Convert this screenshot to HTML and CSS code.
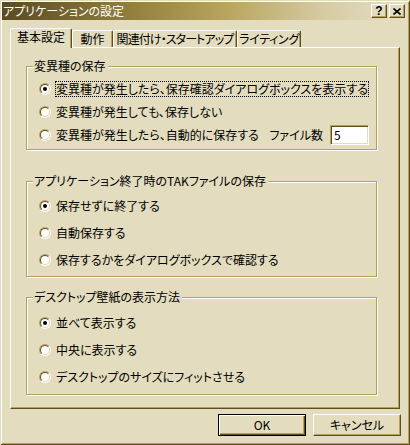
FILE: index.html
```html
<!DOCTYPE html>
<html lang="ja">
<head>
<meta charset="utf-8">
<title>アプリケーションの設定</title>
<link rel="stylesheet" href="styles.css">
</head>
<body>
<div class="window">
  <div class="titlebar">
    <span class="title">アプリケーションの設定</span>
    <div class="caption-btns">
      <span class="cbtn help">?</span>
      <span class="cbtn close"><svg width="8" height="7" viewBox="0 0 8 7"><path d="M0.5 0.5 L7.5 6.5 M7.5 0.5 L0.5 6.5" stroke="#000" stroke-width="1.6" fill="none"/></svg></span>
    </div>
  </div>
  <div class="client">
    <div class="tabs">
      <div class="tab tab-1 selected">基本設定</div>
      <div class="tab tab-2">動作</div>
      <div class="tab tab-3">関連付け・スタートアップ</div>
      <div class="tab tab-4">ライティング</div>
    </div>
    <div class="panel">
      <div class="group g1">
        <div class="legend">変異種の保存</div>
        <div class="rows">
          <div class="row"><span class="radio checked"><span class="radio-in"></span></span><span class="label focus">変異種が発生したら、保存確認ダイアログボックスを表示する</span></div>
          <div class="row"><span class="radio"><span class="radio-in"></span></span><span class="label">変異種が発生しても、保存しない</span></div>
          <div class="row"><span class="radio"><span class="radio-in"></span></span><span class="label">変異種が発生したら、自動的に保存する</span>
            <span class="filecount"><span class="fc-label">ファイル数</span><span class="textbox">5</span></span>
          </div>
        </div>
      </div>
      <div class="group g2">
        <div class="legend">アプリケーション終了時のTAKファイルの保存</div>
        <div class="rows">
          <div class="row"><span class="radio checked"><span class="radio-in"></span></span><span class="label">保存せずに終了する</span></div>
          <div class="row"><span class="radio"><span class="radio-in"></span></span><span class="label">自動保存する</span></div>
          <div class="row"><span class="radio"><span class="radio-in"></span></span><span class="label">保存するかをダイアログボックスで確認する</span></div>
        </div>
      </div>
      <div class="group g3">
        <div class="legend">デスクトップ壁紙の表示方法</div>
        <div class="rows">
          <div class="row"><span class="radio checked"><span class="radio-in"></span></span><span class="label">並べて表示する</span></div>
          <div class="row"><span class="radio"><span class="radio-in"></span></span><span class="label">中央に表示する</span></div>
          <div class="row"><span class="radio"><span class="radio-in"></span></span><span class="label">デスクトップのサイズにフィットさせる</span></div>
        </div>
      </div>
    </div>
    <div class="buttons">
      <div class="btn default">OK</div>
      <div class="btn">キャンセル</div>
    </div>
  </div>
</div>
</body>
</html>
```

FILE: styles.css
```css
* { box-sizing: border-box; }
html, body { margin: 0; padding: 0; }
body {
  background: #e3dcbe;
  font-family: "Noto Sans CJK JP", "Noto Sans", sans-serif;
  font-size: 12px;
  font-feature-settings: "palt";
  line-height: 14px;
  color: #000;
}
.window {
  width: 410px;
  height: 445px;
  background: #e3dcbe;
  padding: 2px 3px 3px 2px;
  box-shadow: inset 1px 1px 0 #e3dcbe, inset -1px -1px 0 #5e4f1c,
              inset 2px 2px 0 #ffffff, inset -2px -2px 0 #b5a15a;
}
.titlebar {
  height: 18px;
  display: flex;
  align-items: center;
  justify-content: space-between;
  background: linear-gradient(to right, #594a22 0%, #8f7c3c 30%, #b8a45e 55%, #d6cca4 80%, #e6dfc6 100%);
}
.title {
  color: #fff;
  padding-left: 1px;
  line-height: 16px;
}
.caption-btns {
  display: flex;
  gap: 2px;
  margin-right: 2px;
}
.cbtn {
  width: 16px;
  height: 14px;
  background: #e3dcbe;
  border: 1px solid;
  border-color: #fff #5e4f1c #5e4f1c #fff;
  box-shadow: inset -1px -1px 0 #b5a15a;
  display: flex;
  align-items: center;
  justify-content: center;
}
.help {
  font-family: "Liberation Sans", sans-serif;
  font-weight: bold;
  font-size: 12px;
  line-height: 12px;
}
.client {
  padding: 8px 7px 0 8px;
}
.tabs {
  display: flex;
  align-items: flex-start;
  height: 19px;
}
.tab {
  height: 17px;
  margin-top: 2px;
  border-top: 1px solid #fff;
  border-left: 1px solid #fff;
  border-right: 1px solid #5e4f1c;
  border-radius: 2px 2px 0 0;
  box-shadow: inset -1px 0 0 #b5a15a;
  text-align: center;
  line-height: 15px;
  white-space: nowrap;
  overflow: hidden;
}
.tab.selected {
  height: 20px;
  margin-top: 0;
  margin-bottom: -1px;
  position: relative;
  z-index: 1;
  background: #e3dcbe;
}
.tab-1 { width: 62px; }
.tab-2 { width: 41px; }
.tab-3 { width: 124px; letter-spacing: -0.9px; }
.tab-4 { width: 64px; letter-spacing: -0.3px; }
.panel {
  width: 390px;
  height: 362px;
  border: 1px solid;
  border-color: #fff #5e4f1c #5e4f1c #fff;
  box-shadow: inset -1px -1px 0 #b5a15a;
  padding: 18px 0 0 15px;
}
.group {
  width: 351px;
  border: 1px solid #b5a15a;
  box-shadow: inset 1px 1px 0 #fff, 1px 1px 0 #fff;
}
.g1 { height: 84px; }
.g2 { height: 96px; margin-top: 31px; }
.g3 { height: 98px; margin-top: 20px; }
.legend {
  width: fit-content;
  margin: -8px 0 0 6px;
  padding: 0 2px 0 1px;
  background: #e3dcbe;
  line-height: 14px;
  white-space: nowrap;
}
.rows {
  display: grid;
  padding: 4px 10px 0 12px;
}
.g1 .rows { grid-template-rows: 23px 23px 23px; }
.g2 .rows { grid-template-rows: 27px 27px 27px; }
.g3 .rows { grid-template-rows: 27px 27px 27px; padding-top: 5px; }
.row {
  display: flex;
  align-items: center;
  white-space: nowrap;
}
.radio {
  width: 12px;
  height: 12px;
  flex: 0 0 12px;
  border-radius: 50%;
  border: 1px solid;
  border-color: #b5a15a #fff #fff #b5a15a;
  margin-right: 4px;
}
.radio-in {
  display: flex;
  align-items: center;
  justify-content: center;
  width: 10px;
  height: 10px;
  border-radius: 50%;
  border: 1px solid;
  border-color: #5e4f1c #e3dcbe #e3dcbe #5e4f1c;
  background: #fff;
}
.checked .radio-in::after {
  content: "";
  width: 4px;
  height: 4px;
  border-radius: 50%;
  background: #000;
}
.label {
  padding-left: 1px;
  padding-right: 1px;
  line-height: 14px;
}
.label.focus {
  padding: 0;
  border: 1px dotted #000;
}
.filecount {
  margin-left: auto;
  display: flex;
  align-items: center;
  gap: 4px;
}
.fc-label { margin-right: 3px; }
.textbox {
  width: 39px;
  height: 20px;
  background: #fff;
  border: 1px solid;
  border-color: #b5a15a #fff #fff #b5a15a;
  box-shadow: inset 1px 1px 0 #5e4f1c, inset -1px -1px 0 #e3dcbe;
  padding: 2px 0 0 3px;
  line-height: 14px;
}
.buttons {
  display: flex;
  justify-content: flex-end;
  gap: 7px;
  margin-top: 5px;
  margin-right: -1px;
}
.btn {
  width: 88px;
  height: 22px;
  border: 1px solid;
  border-color: #fff #5e4f1c #5e4f1c #fff;
  box-shadow: inset -1px -1px 0 #b5a15a;
  text-align: center;
  line-height: 19px;
}
.btn.default {
  border: 1px solid #000;
  box-shadow: inset 1px 1px 0 #fff, inset -1px -1px 0 #5e4f1c, inset -2px -2px 0 #b5a15a;
}
```
